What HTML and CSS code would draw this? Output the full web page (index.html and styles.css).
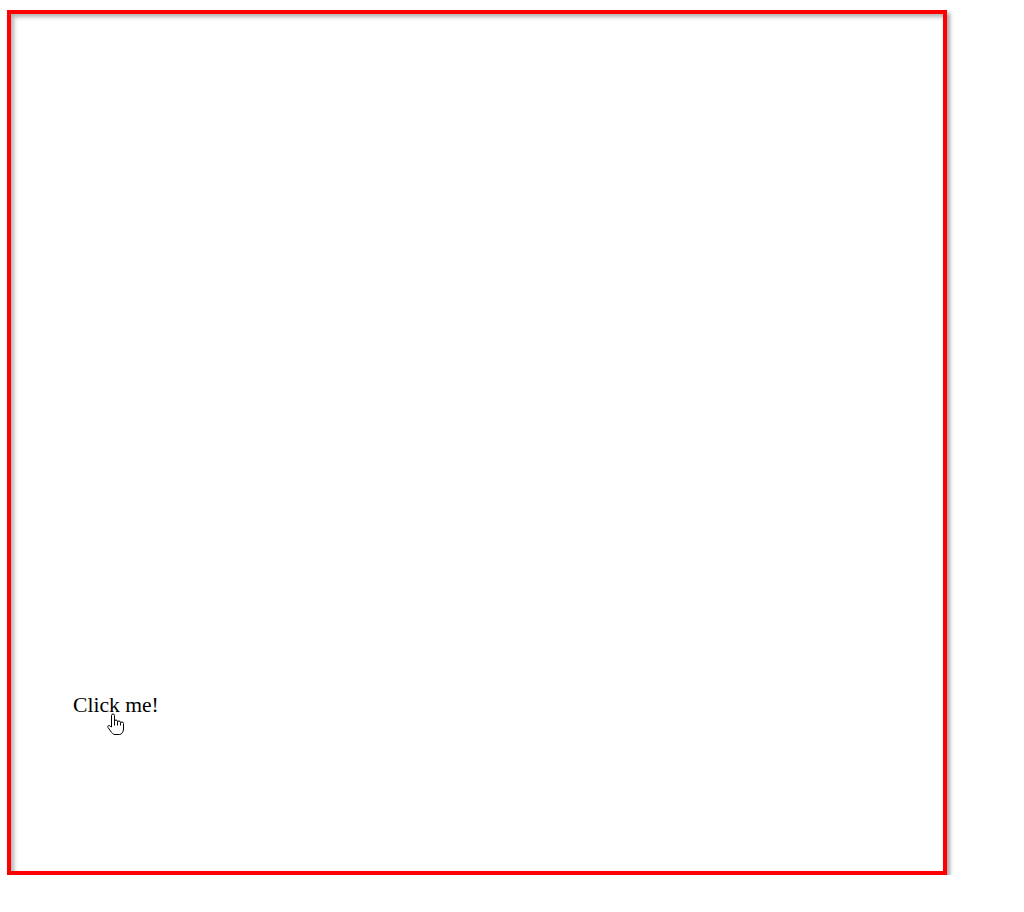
FILE: index.html
```html
<!DOCTYPE html>
<html>
<head>
<meta charset="utf-8">
<link rel="stylesheet" href="styles.css">
</head>
<body>
<div class="frame">
  <span class="label">Click me!</span>
  <svg class="cursor" width="18" height="24" viewBox="0 0 18 24" aria-hidden="true">
    <path d="M4.5 11 V2.5 a1.5 1.5 0 0 1 3 0 V8.5 a1.5 1.5 0 0 1 3 0 V9.5 a1.5 1.5 0 0 1 3 0 V10.5 a1.5 1.5 0 0 1 3 0 V16 c0 3 -2 5.5 -4 5.5 H8 c-2 0 -3 -1.5 -4.5 -3.5 L1 14.5 c-0.8 -1.2 0.4 -2.6 1.6 -1.8 L4.5 14 Z" fill="#fff" stroke="#000" stroke-width="1" stroke-linejoin="round"/>
    <path d="M7.5 8.5 V12.5 M10.5 9.5 V12.5 M13.5 10.5 V12.5" stroke="#000" stroke-width="1" fill="none"/>
  </svg>
</div>
</body>
</html>
```
FILE: styles.css
```css
html, body {
  margin: 0;
  padding: 0;
  background: #ffffff;
}
body {
  padding: 10px 0 0 7px;
  font-family: "Liberation Serif", "Times New Roman", serif;
}
.frame {
  position: relative;
  box-sizing: border-box;
  width: 940px;
  height: 865px;
  border: 4px solid #ff0000;
  box-shadow: 3px 3px 4px rgba(0, 0, 0, 0.35), inset 3px 3px 4px rgba(0, 0, 0, 0.3);
  padding: 679px 0 0 62px;
}
.label {
  font-size: 21.6px;
  color: #000;
}
.cursor {
  position: absolute;
  left: 96px;
  top: 699px;
}
```
